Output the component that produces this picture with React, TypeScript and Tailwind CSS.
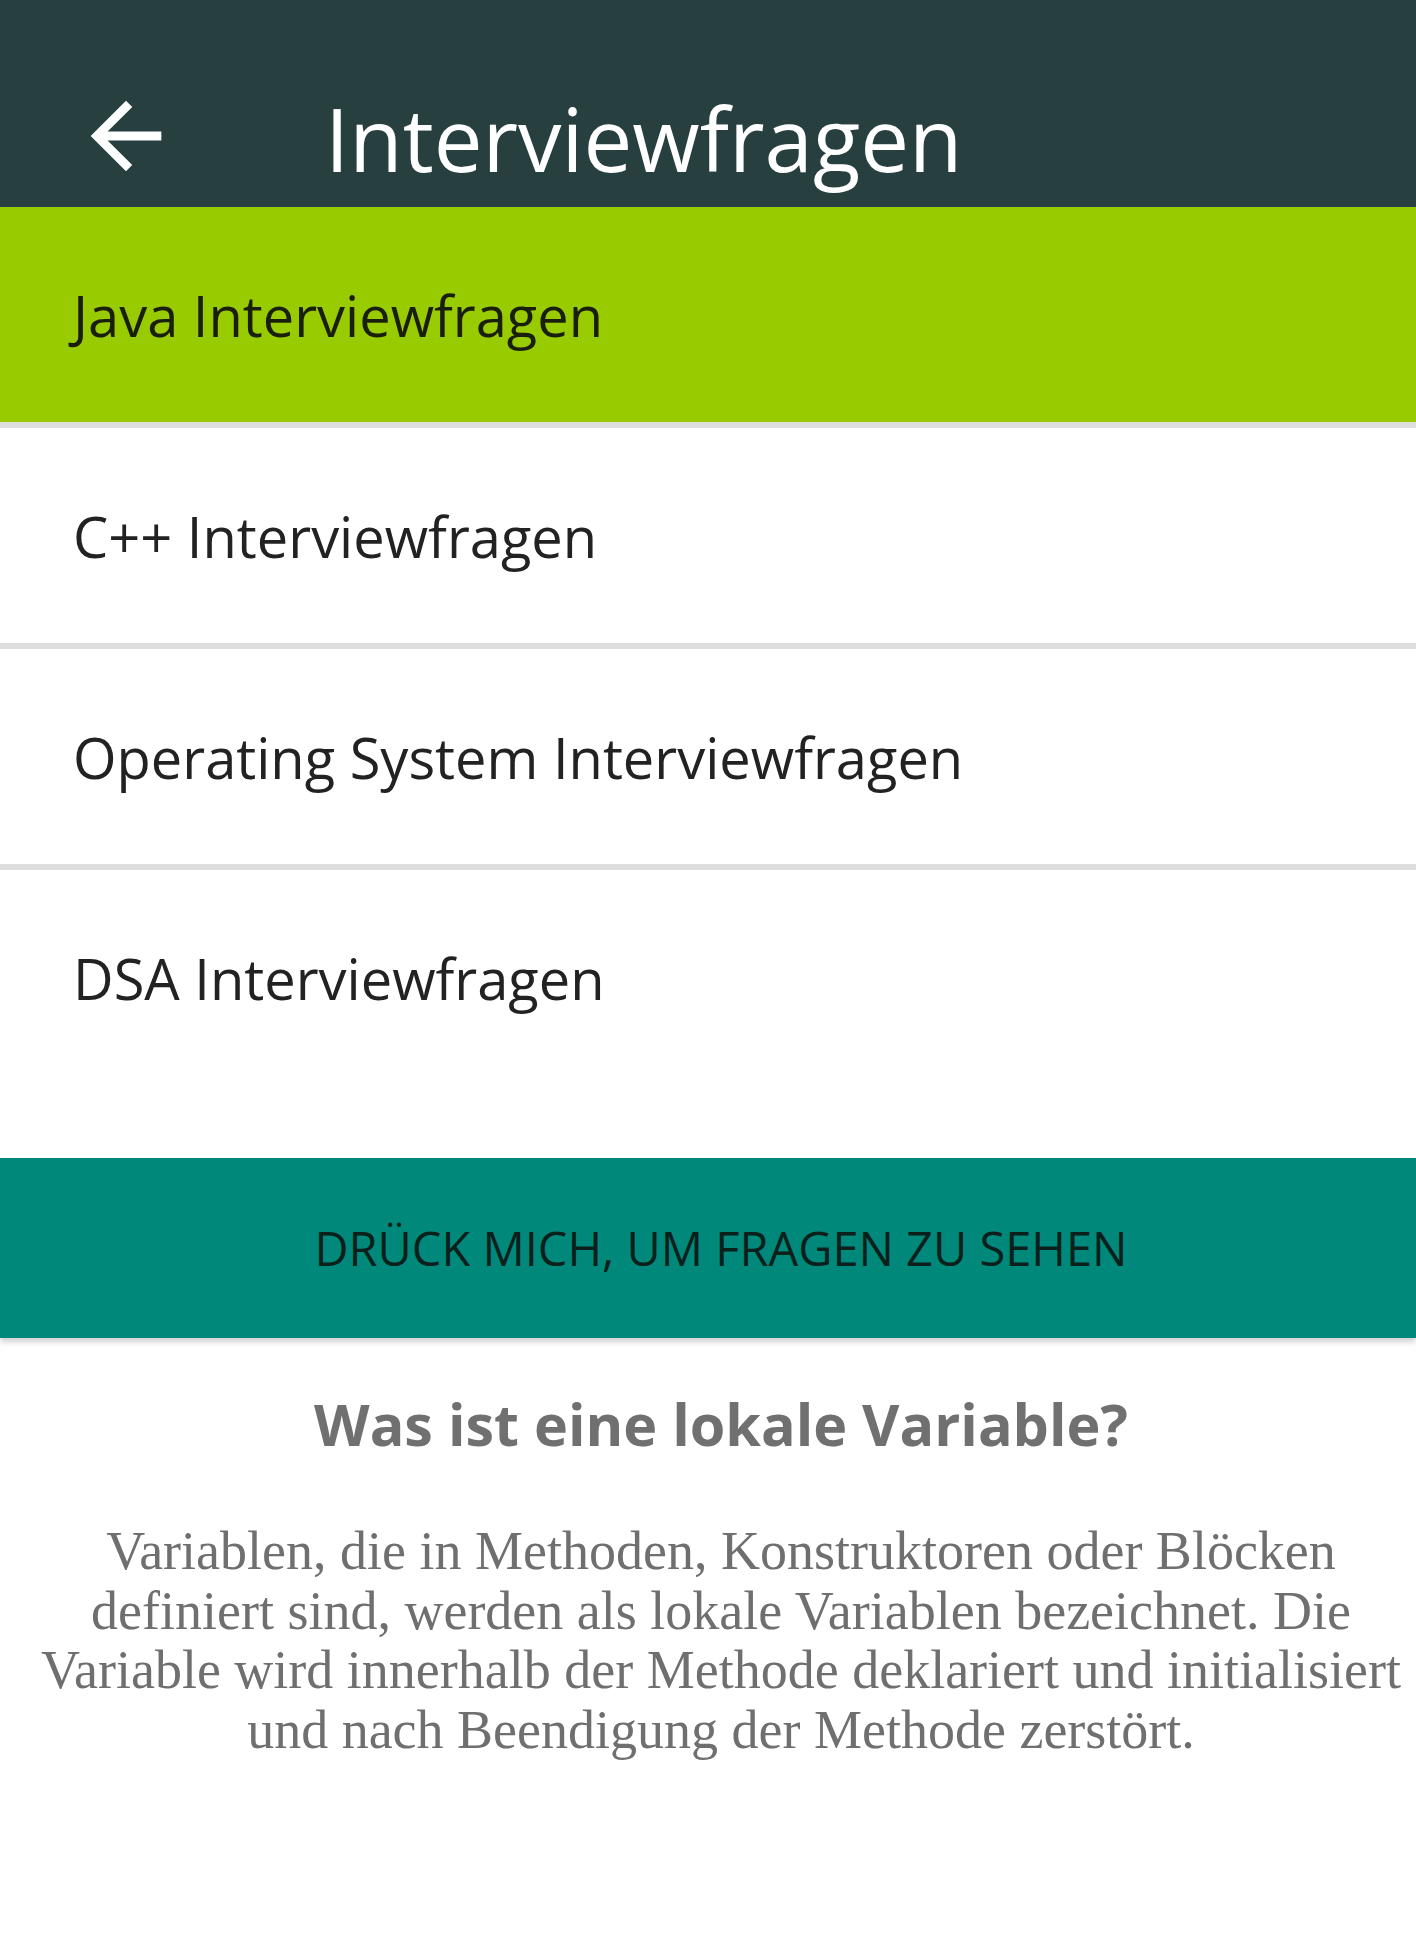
import { useState } from 'react';

const TOPICS = [
  'Java Interviewfragen',
  'C++ Interviewfragen',
  'Operating System Interviewfragen',
  'DSA Interviewfragen',
];

const ANSWER_LINES = [
  'Variablen, die in Methoden, Konstruktoren oder Blöcken',
  'definiert sind, werden als lokale Variablen bezeichnet. Die',
  'Variable wird innerhalb der Methode deklariert und initialisiert',
  'und nach Beendigung der Methode zerstört.',
];

export default function App() {
  const [selected, setSelected] = useState(0);

  return (
    <div className="min-h-[1936px] w-[1416px] bg-white font-['Open_Sans','Noto_Sans',sans-serif]">
      <Toolbar />

      <div className="flex flex-col">
        {TOPICS.map((t, i) => (
          <div key={t} className="flex flex-col">
            <button
              onClick={() => setSelected(i)}
              className={`flex h-[215px] items-center pl-[73px] text-left text-[56px] ${
                i === selected ? 'bg-[#99cc00] text-[#1a1f0d]' : 'bg-white text-[#222222]'
              }`}
            >
              {t}
            </button>
            {i < TOPICS.length - 1 && <div className="h-[6px] bg-[#dedede]" />}
          </div>
        ))}
      </div>

      <div className="h-[73px]" />

      <button className="flex h-[180px] w-full items-center justify-center bg-[#00897b] pl-[26px] text-[47px] text-[#0b1f1b] shadow-[0_4px_6px_rgba(0,0,0,0.18)]">
        DRÜCK MICH, UM FRAGEN ZU SEHEN
      </button>

      <div className="flex flex-col items-center pl-[26px] pt-[46px]">
        <h2 className="text-[57.5px] font-bold leading-[80px] text-[#707070]">Was ist eine lokale Variable?</h2>
        <div className="mt-[58px] flex flex-col items-center font-['Liberation_Serif',serif] text-[54px] leading-[59.5px] text-[#6f6f6f]">
          {ANSWER_LINES.map(l => (
            <div key={l} className="whitespace-nowrap">{l}</div>
          ))}
        </div>
      </div>
    </div>
  );
}

function Toolbar() {
  return (
    <div className="flex h-[207px] items-center bg-[#273f3f] pl-[73px] pt-[70px]">
      <svg width="106" height="106" viewBox="0 0 24 24" fill="white" className="mb-[5px]">
        <path d="M20 11H7.83l5.59-5.59L12 4l-8 8 8 8 1.41-1.41L7.83 13H20v-2z" />
      </svg>
      <div className="ml-[146px] text-[87px] leading-none text-white">Interviewfragen</div>
    </div>
  );
}
